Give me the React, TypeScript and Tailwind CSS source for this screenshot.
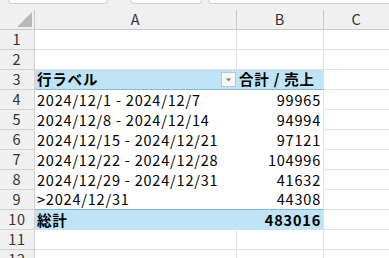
import React from 'react';

const FONT = { fontFamily: '"Noto Sans CJK JP", "Noto Sans", sans-serif' };

type Row = { label: string; value: string };

const rows: Row[] = [
  { label: '2024/12/1 - 2024/12/7', value: '99965' },
  { label: '2024/12/8 - 2024/12/14', value: '94994' },
  { label: '2024/12/15 - 2024/12/21', value: '97121' },
  { label: '2024/12/22 - 2024/12/28', value: '104996' },
  { label: '2024/12/29 - 2024/12/31', value: '41632' },
  { label: '>2024/12/31', value: '44308' },
];

function RowHead({ n }: { n: number }) {
  return (
    <div className="w-[35px] shrink-0 h-full flex items-center justify-center bg-[#f0f0f0] border-r border-b border-[#d2d2d2] text-[#333]">
      {n}
    </div>
  );
}

function EmptyRow({ n }: { n: number }) {
  return (
    <div className="flex h-[20px]">
      <RowHead n={n} />
      <div className="w-[202px] shrink-0 border-r border-b border-[#e1e1e1] bg-white" />
      <div className="w-[87px] shrink-0 border-r border-b border-[#e1e1e1] bg-white" />
      <div className="flex-1 border-b border-[#e1e1e1] bg-white" />
    </div>
  );
}

function FilterButton() {
  return (
    <div className="w-[15px] h-[15px] mr-[1px] flex items-center justify-center border border-[#c4c4c4] bg-[#f7f7f7]">
      <svg width="7" height="4" viewBox="0 0 7 4">
        <path d="M1 0.5 L6 0.5 L3.5 3.5 Z" fill="#777" />
      </svg>
    </div>
  );
}

export default function App() {
  return (
    <div className="w-[389px] h-[258px] overflow-hidden bg-[#f0f0f0] text-[14.5px] leading-none text-black tracking-[0.8px]" style={FONT}>
      {/* formula bar edges */}
      <div className="flex h-[10px]">
        <div className="ml-[8px] w-[100px] h-[4px] bg-white border border-t-0 border-[#cfcfcf] rounded-b-[4px]" />
        <div className="ml-[22px] w-[72px] h-[4px] bg-white border border-t-0 border-[#cfcfcf] rounded-b-[4px]" />
        <div className="ml-[6px] flex-1 h-[4px] bg-white border border-t-0 border-r-0 border-[#cfcfcf] rounded-bl-[4px]" />
      </div>

      {/* column headers */}
      <div className="flex h-[20px] text-[#333]">
        <div className="w-[35px] shrink-0 border-r border-b border-[#c8c8c8] flex items-end justify-end pr-[2px] pb-[2px]">
          <svg width="15" height="15" viewBox="0 0 15 15">
            <path d="M15 0 L15 15 L0 15 Z" fill="#b8b8b8" />
          </svg>
        </div>
        <div className="w-[202px] shrink-0 border-r border-b border-[#c8c8c8] flex items-center justify-center">A</div>
        <div className="w-[87px] shrink-0 border-r border-b border-[#c8c8c8] flex items-center justify-center">B</div>
        <div className="flex-1 border-b border-[#c8c8c8] flex items-center justify-center">C</div>
      </div>

      <EmptyRow n={1} />
      <EmptyRow n={2} />

      {/* pivot header */}
      <div className="flex h-[20px]">
        <RowHead n={3} />
        <div className="w-[202px] shrink-0 bg-[#c0e4f5] border-b border-[#7fb8e0] flex items-center justify-between pl-[2px] font-bold">
          <span>行ラベル</span>
          <FilterButton />
        </div>
        <div className="w-[87px] shrink-0 bg-[#c0e4f5] border-r border-b border-r-[#e1e1e1] border-b-[#7fb8e0] flex items-center pl-[2px] font-bold whitespace-nowrap">
          合計 / 売上
        </div>
        <div className="flex-1 border-b border-[#e1e1e1] bg-white" />
      </div>

      {rows.map((r, i) => (
        <div key={r.label} className="flex h-[20px]">
          <RowHead n={i + 4} />
          <div className={`w-[202px] shrink-0 bg-white flex items-center pl-[2px] whitespace-nowrap ${i === rows.length - 1 ? 'border-b border-[#7fb8e0]' : ''}`}>
            {r.label}
          </div>
          <div className={`w-[87px] shrink-0 bg-white border-r border-[#e1e1e1] flex items-center justify-end pr-[2px] ${i === rows.length - 1 ? 'border-b border-b-[#7fb8e0]' : ''}`}>
            {r.value}
          </div>
          <div className="flex-1 border-b border-[#e1e1e1] bg-white" />
        </div>
      ))}

      {/* grand total */}
      <div className="flex h-[20px]">
        <RowHead n={10} />
        <div className="w-[202px] shrink-0 bg-[#c0e4f5] flex items-center pl-[2px] font-bold">総計</div>
        <div className="w-[87px] shrink-0 bg-[#c0e4f5] border-r border-[#e1e1e1] flex items-center justify-end pr-[2px] font-bold">
          483016
        </div>
        <div className="flex-1 border-b border-[#e1e1e1] bg-white" />
      </div>

      <EmptyRow n={11} />
      <EmptyRow n={12} />
    </div>
  );
}
